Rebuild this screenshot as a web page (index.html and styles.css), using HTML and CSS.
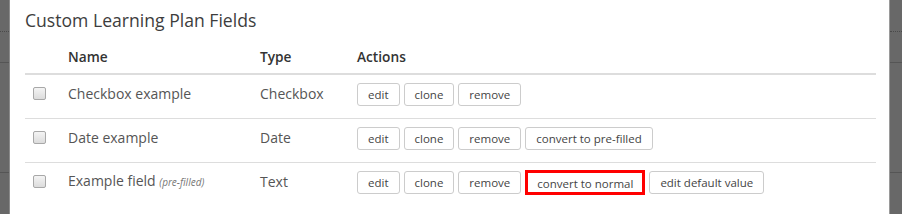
FILE: index.html
```html
<!DOCTYPE html>
<html lang="en">
<head>
  <meta charset="UTF-8" />
  <title>Custom Learning Plan Fields</title>
  <link rel="stylesheet" href="styles.css">
</head>
<body>
  <div class="backdrop left">
    <div class="seg seg-a"></div>
    <div class="seg seg-b"></div>
    <div class="seg seg-c"></div>
    <div class="seg seg-d"></div>
  </div>

  <div class="modal">
    <h2 class="title">Custom Learning Plan Fields</h2>
    <table class="fields">
      <thead>
        <tr>
          <th class="col-check"></th>
          <th class="col-name">Name</th>
          <th class="col-type">Type</th>
          <th>Actions</th>
        </tr>
      </thead>
      <tbody>
        <tr>
          <td class="col-check"><span class="check"></span></td>
          <td>Checkbox example</td>
          <td>Checkbox</td>
          <td>
            <div class="actions">
              <button>edit</button>
              <button>clone</button>
              <button>remove</button>
            </div>
          </td>
        </tr>
        <tr>
          <td class="col-check"><span class="check"></span></td>
          <td>Date example</td>
          <td>Date</td>
          <td>
            <div class="actions">
              <button>edit</button>
              <button>clone</button>
              <button>remove</button>
              <button>convert to pre-filled</button>
            </div>
          </td>
        </tr>
        <tr>
          <td class="col-check"><span class="check"></span></td>
          <td>Example field <em class="note">(pre-filled)</em></td>
          <td>Text</td>
          <td>
            <div class="actions">
              <button>edit</button>
              <button>clone</button>
              <button>remove</button>
              <button class="marked">convert to normal</button>
              <button>edit default value</button>
            </div>
          </td>
        </tr>
      </tbody>
    </table>
  </div>

  <div class="backdrop right">
    <div class="seg seg-a"></div>
    <div class="seg seg-b"></div>
    <div class="seg seg-c"></div>
    <div class="seg seg-d"></div>
  </div>
</body>
</html>
```

FILE: styles.css
```css
* { box-sizing: border-box; }
html, body {
  margin: 0;
  padding: 0;
  height: 214px;
  overflow: hidden;
}
body {
  display: flex;
  flex-direction: row;
  font-family: "Open Sans", Arial, sans-serif;
  color: #555;
  background: #fff;
}
.backdrop {
  display: flex;
  flex-direction: column;
  background: #666;
}
.backdrop.left { width: 10px; border-right: 1px solid #8a8a8a; }
.backdrop.right { width: 13px; border-left: 1px solid #9a9a9a; }
.seg { background: #686868; }
.seg-a { height: 32px; border-bottom: 1px dotted #4a4a4a; }
.seg-b { height: 31px; border-bottom: 1px solid #555; }
.seg-c { height: 110px; border-bottom: 1px solid #555; }
.seg-d { flex: 1; }
.modal {
  flex: 1;
  padding: 0 13px 0 15px;
}
.title {
  margin: 7px 0 0;
  font-size: 17.6px;
  font-weight: 400;
  color: #3d3d3d;
  line-height: 26px;
}
.fields {
  width: 100%;
  border-collapse: collapse;
  margin-top: 14px;
  table-layout: fixed;
}
.fields th {
  text-align: left;
  font-size: 13.7px;
  font-weight: 600;
  color: #333;
  padding: 0 8px 7px;
  border-bottom: 2px solid #ddd;
  line-height: 19px;
}
.fields td {
  font-size: 14px;
  padding: 8px 8px 12px;
  border-bottom: 1px solid #ddd;
  vertical-align: middle;
  line-height: 19px;
}
.fields tbody tr:last-child td { border-bottom: none; }
.fields td:nth-child(2), .fields td:nth-child(3) { padding-top: 0; padding-bottom: 7px; }
.col-check { width: 35px; }
.col-name { width: 192px; }
.col-type { width: 97px; }
.check {
  display: block;
  width: 13px;
  height: 13px;
  border: 1px solid #a8a8a8;
  border-radius: 2px;
  background: linear-gradient(#f4f4f4, #dcdcdc);
  margin-top: -3px;
}
.note {
  font-size: 10px;
  color: #777;
}
.actions {
  display: flex;
  gap: 4px;
}
.actions button {
  font-family: "Open Sans", Arial, sans-serif;
  font-size: 11.5px;
  color: #444;
  background: #fff;
  border: 1px solid #ccc;
  border-radius: 3px;
  height: 23px;
  padding: 0 10px;
  line-height: 21px;
}
.actions button.marked {
  border: 3px solid #ff0000;
  border-radius: 0;
  height: 25px;
  margin-top: -1px;
  margin-bottom: -1px;
  padding: 0 9px;
}
```
